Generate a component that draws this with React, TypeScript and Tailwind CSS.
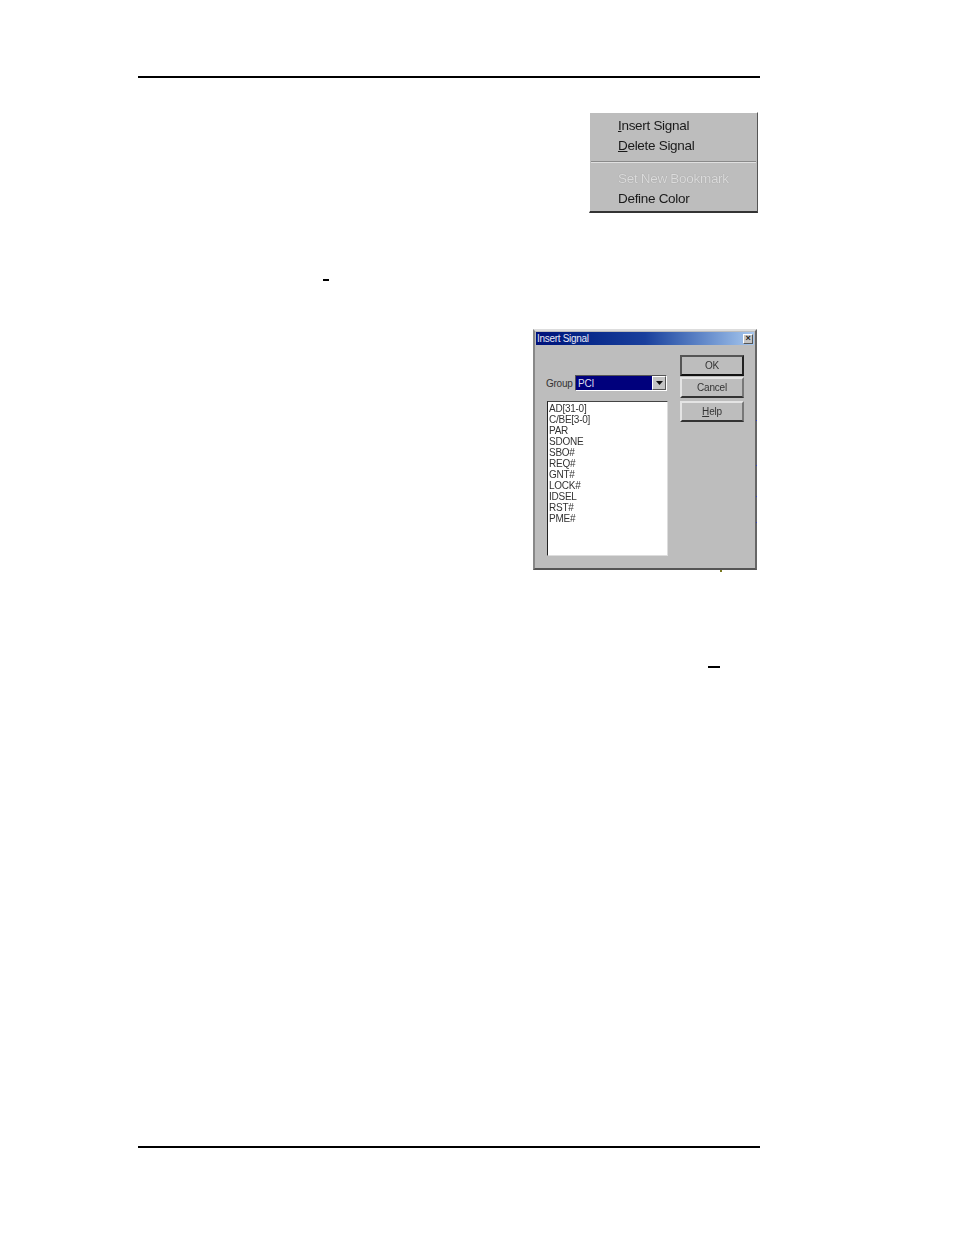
const font = "font-['Liberation_Sans',Arial,sans-serif]";

const signals = ['AD[31-0]', 'C/BE[3-0]', 'PAR', 'SDONE', 'SBO#', 'REQ#', 'GNT#', 'LOCK#', 'IDSEL', 'RST#', 'PME#'];

const raised = 'border border-t-white border-l-white border-r-[#555] border-b-[#333]';

function ContextMenu() {
  return (
    <div className={`ml-[451px] mt-[34px] h-[101px] w-[169px] bg-[#bdbdbd] ${raised} border-b-2 border-b-[#222] pt-[2px] text-[13.5px] tracking-[-0.3px] text-[#1a1a1a] blur-[0.5px]`}>
      <div className="h-[21px] pl-[28px] leading-[21px]"><u>I</u>nsert Signal</div>
      <div className="h-[20px] pl-[28px] leading-[20px]"><u>D</u>elete Signal</div>
      <div className="mx-[1px] mt-[5px] h-[2px] border-t border-t-[#8a8a8a] border-b border-b-[#e0e0e0]" />
      <div className="mt-[5px] h-[21px] pl-[28px] leading-[21px] text-[#dcdcdc] [text-shadow:0_0_1px_#8f8f8f]">Set New Bookmark</div>
      <div className="h-[20px] pl-[28px] leading-[20px]">Define Color</div>
    </div>
  );
}

function DialogButton({ label, strong }: { label: React.ReactNode; strong?: boolean }) {
  return (
    <div className={`flex h-[21px] w-[64px] items-center justify-center bg-[#bdbdbd] text-[10px] tracking-[-0.2px] text-[#333] ${strong ? 'border-2 border-t-[#555] border-l-[#555] border-r-[#222] border-b-[#111]' : 'border-2 border-t-[#e4e4e4] border-l-[#e4e4e4] border-r-[#777] border-b-[#333]'}`}>
      {label}
    </div>
  );
}

function InsertSignalDialog() {
  return (
    <div className="relative ml-[395px] mt-[48px] h-[241px] w-[224px] border-2 border-t-[#ddd] border-l-[#888] border-r-[#666] border-b-[#555] bg-[#bdbdbd] px-[1px] text-[10px] tracking-[-0.25px] text-[#333] blur-[0.5px]">
      <div className="mt-[1px] flex h-[13px] items-center justify-between bg-gradient-to-r from-[#00107a] via-[#1a3f9c] to-[#a8c8ee] pl-[1px] pr-[1px] text-[10px] tracking-[-0.3px] text-[#e8e8f4]">
        <span>Insert Signal</span>
        <span className="flex h-[10px] w-[10px] items-center justify-center border border-t-white border-l-white border-r-[#555] border-b-[#555] bg-[#c4c4c4] text-[9px] font-bold leading-none text-[#222]">×</span>
      </div>
      <div className="flex pl-[10px] pt-[10px]">
        <div className="w-[134px]">
          <div className="mt-[20px] flex h-[16px] items-center">
            <span className="w-[29px]">Group</span>
            <div className="flex h-[16px] w-[92px] items-center justify-between border border-t-[#555] border-l-[#555] border-r-white border-b-white bg-[#00007c] pl-[2px] text-[#dde]">
              <span>PCI</span>
              <span className="flex h-[14px] w-[14px] items-center justify-center border border-t-white border-l-white border-r-[#555] border-b-[#555] bg-[#c4c4c4]">
                <svg width="7" height="4" viewBox="0 0 7 4"><path d="M0 0h7L3.5 4z" fill="#111" /></svg>
              </span>
            </div>
          </div>
          <div className="ml-[1px] mt-[10px] h-[155px] w-[121px] border border-t-[#444] border-l-[#222] border-r-[#ddd] border-b-[#ddd] bg-white pl-[1px] pt-[1px] leading-[11px]">
            {signals.map((s) => (
              <div key={s} className="h-[11px]">{s}</div>
            ))}
          </div>
        </div>
        <div className="flex flex-col gap-[1px]">
          <DialogButton label="OK" strong />
          <DialogButton label="Cancel" />
          <div className="mt-[2px]">
            <DialogButton label={<><u>H</u>elp</>} />
          </div>
        </div>
      </div>
      {/* scan specks sitting on the dialog edge */}
      <span className="absolute left-[221px] top-[89px] h-[1px] w-[1px] bg-[#3040c0]" />
      <span className="absolute left-[221px] top-[134px] h-[1px] w-[1px] bg-[#3040c0]" />
      <span className="absolute left-[221px] top-[165px] h-[1px] w-[1px] bg-[#3040c0]" />
      <span className="absolute left-[221px] top-[191px] h-[1px] w-[1px] bg-[#3040c0]" />
      <span className="absolute left-[185px] top-[239px] h-[2px] w-[2px] bg-[#7a7a20]" />
    </div>
  );
}

export default function App() {
  return (
    <div className={`h-[1235px] w-[954px] overflow-hidden bg-white pl-[138px] ${font}`}>
      <div className="w-[622px]">
        <div className="mt-[76px] h-[2px] bg-black" />
        <ContextMenu />
        <div className="ml-[185px] mt-[66px] h-[2px] w-[6px] bg-black" />
        <InsertSignalDialog />
        <div className="ml-[570px] mt-[96px] h-[2px] w-[12px] bg-black" />
        <div className="mt-[478px] h-[2px] bg-black" />
      </div>
    </div>
  );
}
